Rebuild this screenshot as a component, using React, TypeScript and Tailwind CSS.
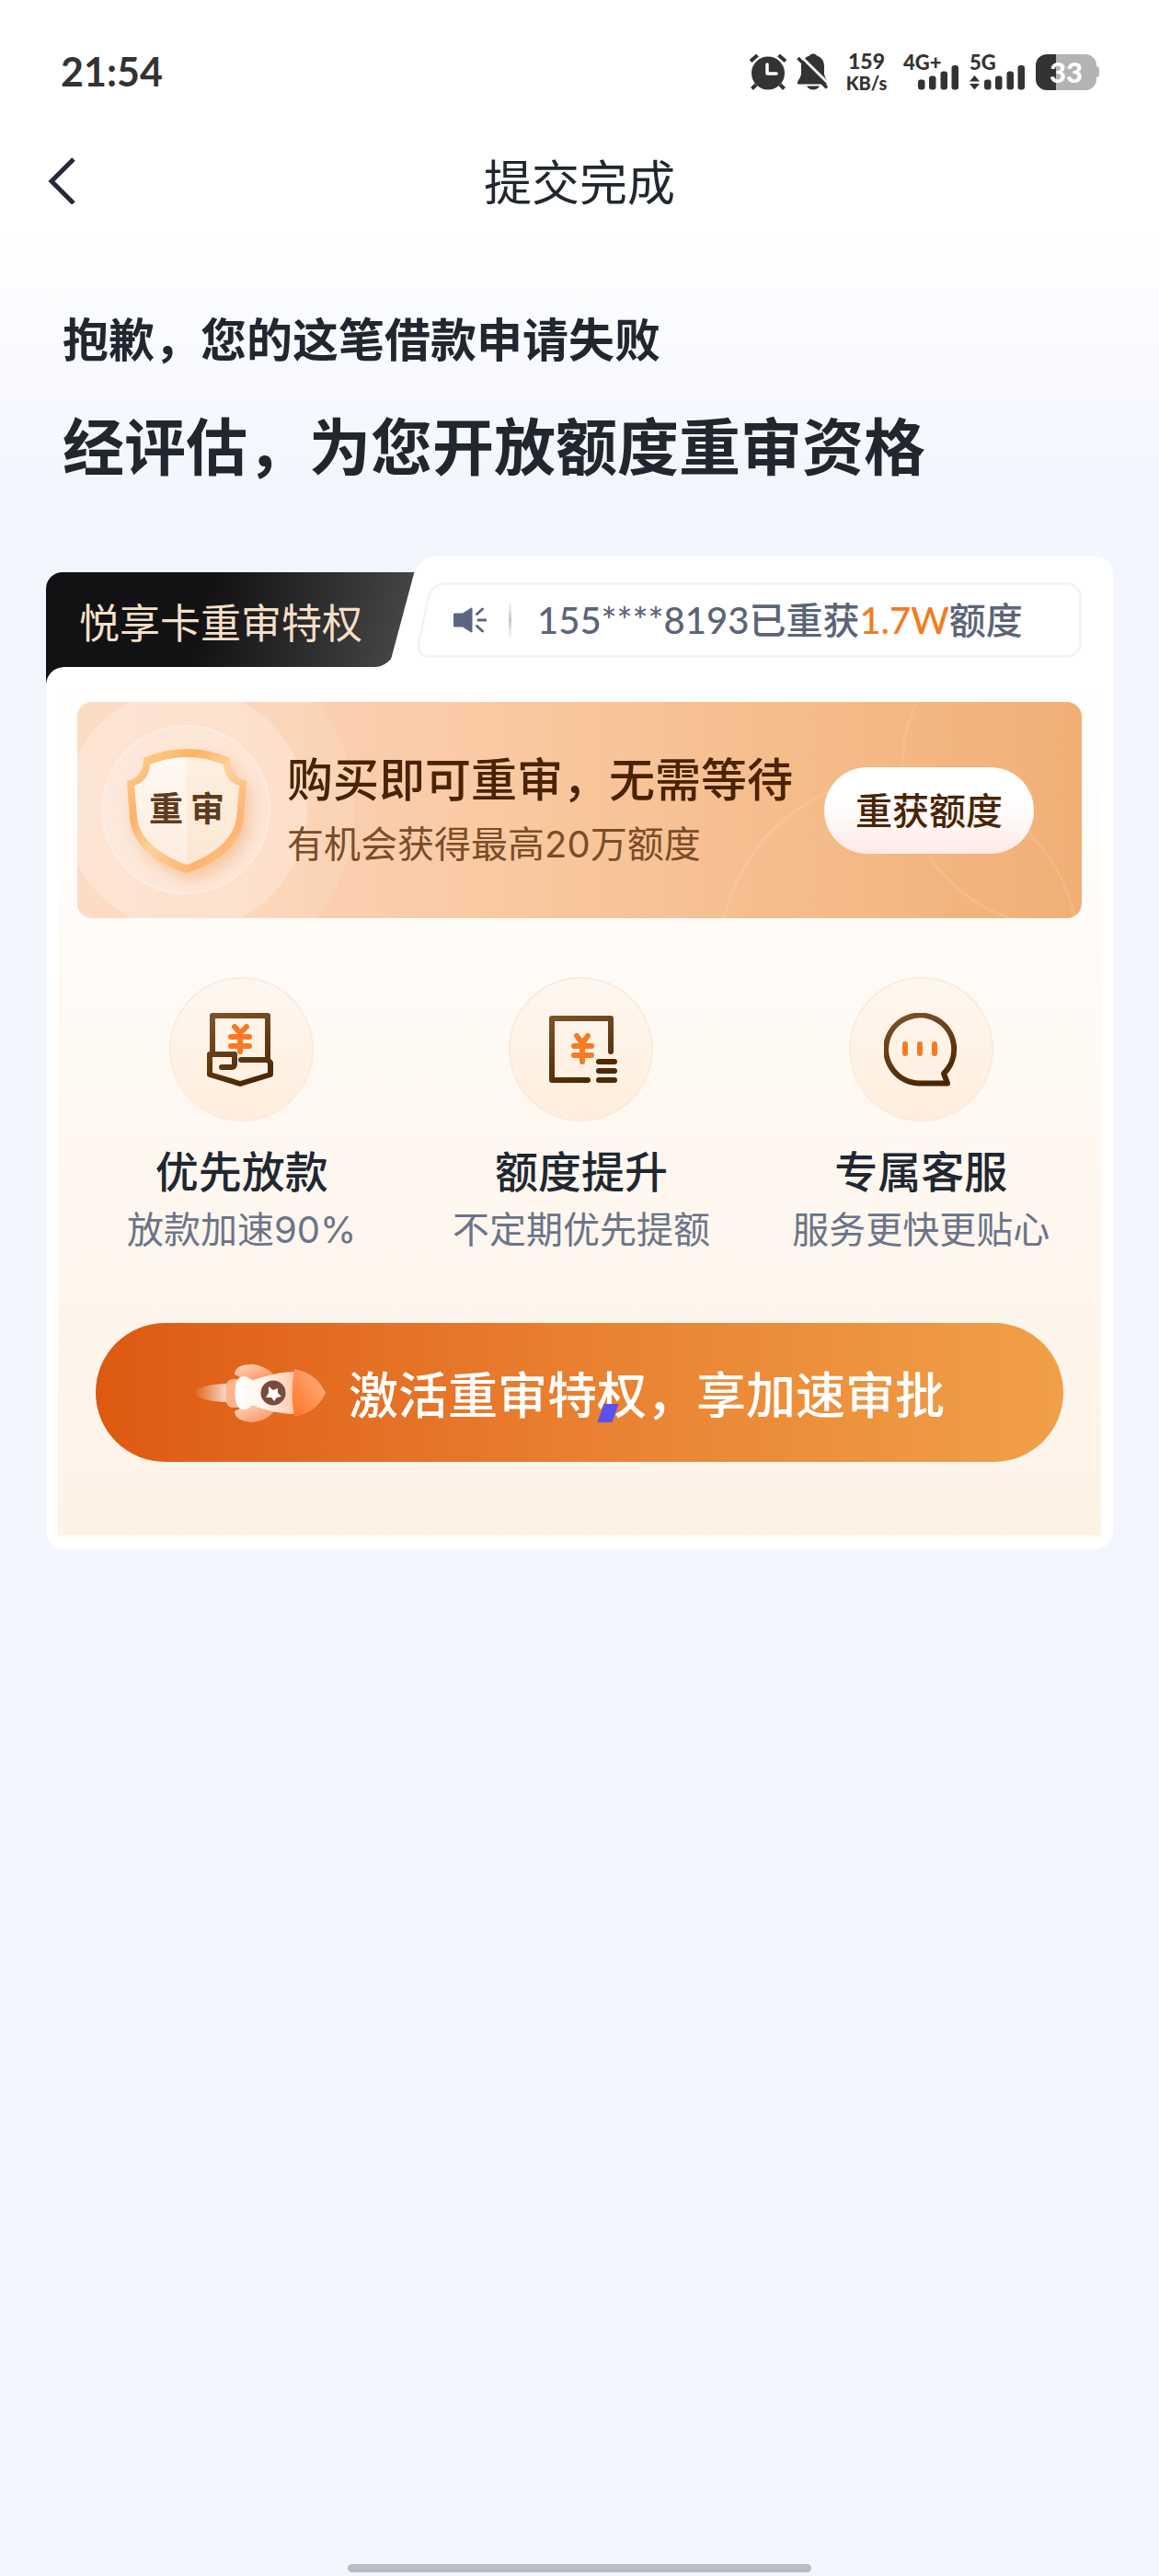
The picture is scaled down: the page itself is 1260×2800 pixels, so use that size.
import type { ReactNode } from 'react'

type Feature = {
  title: string
  desc: string
  icon: ReactNode
}

function AlarmIcon() {
  return (
    <svg className="h-10 w-[42px]" viewBox="0 0 42 40" fill="none" aria-hidden="true">
      <circle cx="21" cy="21.500" r="18" fill="#333" />
      <path d="M2 8.500 9.500 2M40 8.500 32.500 2" stroke="#333" strokeWidth="4" />
      <path d="M8 34 3.500 38.500M34 34l4.500 4.500" stroke="#333" strokeWidth="4" />
      <path d="M20 12v10h10" stroke="#fff" strokeWidth="3.500" strokeLinecap="round" strokeLinejoin="round" />
    </svg>
  )
}

function BellOffIcon() {
  return (
    <svg className="h-10 w-[36px]" viewBox="0 0 36 40" fill="none" aria-hidden="true">
      <path d="M14 2.500C15 1 16.500 .5 18 .5s3 .5 4 2c5 1.500 8 6 8 11.500v8c0 3 2 5 4 9v2.500H1V31c2-4 4-6 4-9v-8C5 8.500 9 4 14 2.500Z" fill="#333" />
      <path d="M11 35.500h14c-1.500 2.500-4 4-7 4s-5.500-1.500-7-4Z" fill="#333" />
      <path d="M4 2.500 36 34" stroke="#fff" strokeWidth="3" />
      <path d="M1.500 5 33 37.500" stroke="#333" strokeWidth="3.500" />
    </svg>
  )
}

function SignalBars() {
  return (
    <svg className="h-7 w-[44px]" viewBox="0 0 44 28" fill="#333" aria-hidden="true">
      <rect x="0" y="16.500" width="7.500" height="11" rx="3" />
      <rect x="12" y="12.500" width="7.500" height="15" rx="3" />
      <rect x="24.500" y="7.500" width="7.500" height="20" rx="3" />
      <rect x="36.500" y="1" width="7.500" height="26.500" rx="3" />
    </svg>
  )
}

function StatusBar() {
  return (
    <div className="mt-12 flex h-[60px] items-center justify-between pl-[66px] pr-[65px] font-['Lato',sans-serif] font-bold text-[#333]">
      <span className="text-[43px] leading-[60px]">21:54</span>
      <div className="flex items-center font-black">
        <AlarmIcon />
        <span className="ml-[10px] flex">
          <BellOffIcon />
        </span>
        <span className="ml-4 w-12 text-center text-[23px] leading-6">
          159
          <span className="block text-[20px]">KB/s</span>
        </span>
        <span className="relative ml-4 flex h-10 w-[60px] items-end justify-end">
          <span className="absolute left-0 top-0 text-[22px] leading-5">4G+</span>
          <SignalBars />
        </span>
        <span className="relative ml-3 flex h-10 w-[60px] items-end justify-between">
          <span className="absolute left-0 top-0 text-[22px] leading-5">5G</span>
          <svg className="h-4 w-[11px]" viewBox="0 0 11 16" fill="#333" aria-hidden="true">
            <path d="M5.500 0 11 6.500H0ZM5.500 15.500 11 9H0Z" />
          </svg>
          <SignalBars />
        </span>
        <span className="ml-3 flex items-center">
          <span className="flex h-[39px] w-[66px] items-center justify-center rounded-xl bg-linear-to-r from-[#333] from-33% to-[#b3b3b3] to-33% text-[31px] leading-8 text-white">
            33
          </span>
          <span className="h-3 w-[3px] rounded-r-sm bg-[#b3b3b3]" />
        </span>
      </div>
    </div>
  )
}

function SpeakerIcon() {
  return (
    <svg className="h-7 w-9 shrink-0" viewBox="0 0 36 28" fill="none" aria-hidden="true">
      <path d="M1.500 6.500H10L19 .8c.8-.5 1.500 0 1.500.8v24.800c0 .8-.7 1.300-1.500.8L10 21.500H1.500C.7 21.500 0 21 0 20V8c0-1 .7-1.500 1.500-1.500Z" fill="#5b6780" />
      <path d="m25.500 7.500 6-5.500M27 14h8M25.500 20.500l6 5.500" stroke="#5b6780" strokeWidth="3" strokeLinecap="round" />
    </svg>
  )
}

function Shield() {
  return (
    <svg className="absolute inset-0 h-full w-full" viewBox="0 0 130 136" fill="none" overflow="visible" aria-hidden="true">
      <defs>
        <linearGradient id="shieldEdge" x1="0" y1="0" x2="1" y2="1">
          <stop offset="0" stopColor="#ffd39a" />
          <stop offset=".3" stopColor="#fbb367" />
          <stop offset=".5" stopColor="#ffd09c" />
          <stop offset=".75" stopColor="#fdb471" />
          <stop offset="1" stopColor="#ffc999" />
        </linearGradient>
        <linearGradient id="shieldFace" x1="0" y1="0" x2="0" y2="1">
          <stop offset="0" stopColor="#fff9f3" />
          <stop offset="1" stopColor="#fdeddd" />
        </linearGradient>
      </defs>
      <path
        className="drop-shadow-[6px_8px_8px_rgba(240,150,80,0.4)]"
        d="M65 1c17 0 33 4 47 10 0 15 6 22 18 25l-3 40c-2 28-26 48-62 60C29 124 5 104 3 76L0 36c12-3 18-10 18-25C32 5 48 1 65 1Z"
        fill="url(#shieldEdge)"
      />
      <path d="M65 10c14 0 28 3 40 8 1 12 6 19 17 23l-3 34c-2 22-22 40-54 52-32-12-52-30-54-52L8 41c11-4 16-11 17-23 12-5 26-8 40-8Z" fill="url(#shieldFace)" />
      <path d="M65 10c14 0 28 3 40 8 1 12 6 19 17 23l-3 34c-2 22-22 40-54 52Z" fill="#fbdcc0" opacity=".35" />
    </svg>
  )
}

function Rocket() {
  return (
    <svg className="h-16 w-36 shrink-0" viewBox="0 0 144 64" fill="none" aria-hidden="true">
      <defs>
        <linearGradient id="flame" x1="0" y1="0" x2="1" y2="0">
          <stop offset="0" stopColor="#fff" stopOpacity="0" />
          <stop offset="1" stopColor="#fff" stopOpacity=".8" />
        </linearGradient>
        <linearGradient id="fin" x1="0" y1="0" x2="1" y2="1">
          <stop offset="0" stopColor="#ffd8c0" />
          <stop offset="1" stopColor="#f98a4e" />
        </linearGradient>
        <linearGradient id="hull" x1="0" y1="0" x2="1" y2="0">
          <stop offset="0" stopColor="#fff" />
          <stop offset=".5" stopColor="#fff2ea" />
          <stop offset="1" stopColor="#ffc9a8" />
        </linearGradient>
        <linearGradient id="nose" x1="0" y1="1" x2="1" y2="0">
          <stop offset="0" stopColor="#ff7427" />
          <stop offset=".6" stopColor="#ff9a60" />
          <stop offset="1" stopColor="#ffb68a" />
        </linearGradient>
      </defs>
      <path d="M0 30c10-6 22-8 38-8v20C22 42 10 40 0 34Z" fill="url(#flame)" />
      <path d="M44 12C44 4 52 1 63 1c11 1 21 6 27 16L56 18Z" fill="url(#fin)" />
      <path d="M44 52c0 8 8 11 19 12 11-1 21-6 27-16L56 46Z" fill="url(#fin)" />
      <rect x="35" y="17" width="18" height="31" rx="7" fill="#ffb48c" />
      <path d="M46 20c2-4 4-6 9-6 4 0 5 3 9 4 16-5 30-9 45-9v46c-15 0-29-4-45-9-4 1-5 4-9 4-5 0-7-2-9-6-2-8-2-16 0-24Z" fill="url(#hull)" />
      <path d="M109 6c17 3 28 13 34 26-6 13-17 23-34 26-3-17-3-35 0-52Z" fill="url(#nose)" />
      <circle cx="86" cy="32" r="13.500" fill="#7a4a3c" />
      <path d="m81 25 5 4 5-2 0 5 4 4-5 1-3 4-3-4-6 0 3-5Z" fill="#fff" />
    </svg>
  )
}

function LoanIcon() {
  return (
    <svg className="h-20 w-20" viewBox="0 0 80 80" fill="none" strokeLinecap="round" strokeLinejoin="round" aria-hidden="true">
      <defs>
        <linearGradient id="loan" gradientUnits="userSpaceOnUse" x1="20" y1="0" x2="50" y2="80">
          <stop offset="0" stopColor="#7d5228" />
          <stop offset="1" stopColor="#4a2400" />
        </linearGradient>
      </defs>
      <path d="M8 43V3h60v48" stroke="url(#loan)" strokeWidth="6" />
      <path d="M18 59h10c3 0 4-1 4-4V45H5v22l33 10 33-10V54l-3-3H39" stroke="url(#loan)" strokeWidth="6" />
      <path d="m32 15 6 7 7-7M28 26h20M28 36h20M38 24v18" stroke="#fa7a24" strokeWidth="6" />
    </svg>
  )
}

function LimitIcon() {
  return (
    <svg className="h-20 w-20" viewBox="0 0 80 80" fill="none" strokeLinecap="round" strokeLinejoin="round" aria-hidden="true">
      <defs>
        <linearGradient id="limit" gradientUnits="userSpaceOnUse" x1="20" y1="0" x2="50" y2="80">
          <stop offset="0" stopColor="#7d5228" />
          <stop offset="1" stopColor="#4a2400" />
        </linearGradient>
      </defs>
      <path d="M72 42V6H8v67h39" stroke="url(#limit)" strokeWidth="6" />
      <path d="M59 53h17M59 63h17M59 73h17" stroke="#4f2904" strokeWidth="6" />
      <path d="m35 25 6 8 6-8M32 36h19M32 46h19M41 34v19" stroke="#fa7a24" strokeWidth="6" />
    </svg>
  )
}

function ServiceIcon() {
  return (
    <svg className="h-20 w-20" viewBox="0 0 80 80" fill="none" strokeLinecap="round" strokeLinejoin="round" aria-hidden="true">
      <defs>
        <linearGradient id="service" gradientUnits="userSpaceOnUse" x1="20" y1="0" x2="50" y2="80">
          <stop offset="0" stopColor="#7d5228" />
          <stop offset="1" stopColor="#4a2400" />
        </linearGradient>
      </defs>
      <path d="M65 66a37 37 0 1 0-26 10.500h30c-1-4-3-7-4-10.500Z" stroke="url(#service)" strokeWidth="6" />
      <path d="M23 34v10M39 34v10M55 34v10" stroke="#fa7a24" strokeWidth="6" />
    </svg>
  )
}

const FEATURES: Feature[] = [
  { title: '优先放款', desc: '放款加速90%', icon: <LoanIcon /> },
  { title: '额度提升', desc: '不定期优先提额', icon: <LimitIcon /> },
  { title: '专属客服', desc: '服务更快更贴心', icon: <ServiceIcon /> },
]

function CardHeader() {
  return (
    <div className="relative flex h-[121px]">
      {/* dark tab with a slanted right edge */}
      <div className="relative mt-[18px] w-[389px] shrink-0">
        <div className="absolute bottom-0 right-0 h-6 w-12 bg-white" />
        <div className="absolute -bottom-5 left-0 top-0 w-12 rounded-tl-[18px] bg-[#121214]" />
        <div className="absolute inset-y-0 left-5 right-0 origin-center -skew-x-15 rounded-br-[18px] bg-linear-to-r from-[#121214] from-40% to-[#454545]" />
        <h3 className="relative pl-9 text-[44px] leading-[106px] text-[#f6dfc6]">悦享卡重审特权</h3>
      </div>

      {/* notice */}
      <div className="relative flex-1">
        <div className="absolute inset-y-0 left-0 w-1/2 -skew-x-15 rounded-tl-[20px] bg-white" />
        <div className="absolute inset-y-0 left-1/4 right-0 rounded-tr-[20px] bg-white" />
        <div className="relative ml-5 mr-[34px] mt-[29px] flex h-[82px] items-center">
          <div className="absolute inset-y-0 left-0 w-1/2 -skew-x-12 rounded-l-2xl border-[3px] border-r-0 border-[#f3f3f3]" />
          <div className="absolute inset-y-0 left-[45%] right-0 rounded-r-2xl border-[3px] border-l-0 border-[#f3f3f3]" />
          <div className="relative flex items-center pl-[34px]">
            <SpeakerIcon />
            <span className="ml-6 h-[42px] w-[3px] bg-linear-to-b from-transparent via-[#c4c6cc] to-transparent" />
            <p className="ml-7 whitespace-nowrap font-['Lato','Noto_Sans_CJK_SC',sans-serif] text-[40px] font-medium leading-[60px] text-[#5b6478]">
              155****8193已重获<span className="text-[#f47a20]">1.7W</span>额度
            </p>
          </div>
        </div>
      </div>
    </div>
  )
}

function Banner() {
  return (
    <div className="relative mx-[34px] flex h-[235px] items-center overflow-hidden rounded-2xl bg-linear-to-r from-[#fdd8c0] via-[#f9c8a0] via-45% to-[#f1af74]">
      <div className="absolute -left-[66px] -top-[67px] size-[368px] rounded-full bg-white/10" />
      <div className="absolute -left-[14px] -top-[15px] size-[264px] rounded-full bg-white/25" />
      <div className="absolute left-[26px] top-[25px] size-[184px] rounded-full border-2 border-white/20 bg-white/20" />
      <div className="absolute right-[1px] top-[81px] size-[394px] rounded-full border-[3px] border-white/10" />
      <div className="absolute -right-[149px] -top-[101px] size-[346px] rounded-full border-[3px] border-white/10" />

      <div className="relative ml-[54px] flex h-[136px] w-[130px] shrink-0 items-center justify-center gap-2 pb-2 text-[37px] font-bold leading-[52px] text-[#5f3b1c]">
        <Shield />
        <span className="relative">重</span>
        <span className="relative">审</span>
      </div>
      <div className="relative ml-11 flex-1 whitespace-nowrap">
        <h4 className="text-[50px] font-medium leading-[74px] text-[#4a2400]">购买即可重审，无需等待</h4>
        <p className="font-['Inter','Noto_Sans_CJK_SC',sans-serif] text-[40px] leading-[74px] text-[#7a4d28]">
          有机会获得最高20万额度
        </p>
      </div>
      <button
        type="button"
        className="relative mr-[52px] h-[94px] w-[228px] shrink-0 rounded-full bg-linear-to-b from-white from-40% to-[#feeae6] pb-1 text-[40px] font-medium leading-[60px] text-[#4a2400]"
      >
        重获额度
      </button>
    </div>
  )
}

export default function App() {
  return (
    <main className="flex min-h-screen flex-col bg-[#f3f6ff] bg-linear-to-b from-white from-[250px] to-[#f3f6ff] to-[530px] font-['Noto_Sans_CJK_SC',sans-serif] text-[#212731]">
      <StatusBar />

      <header className="relative mt-[38px] flex h-[100px] items-center justify-center">
        <button type="button" aria-label="返回" className="absolute left-[50px] top-6 p-0">
          <svg className="h-[52px] w-9" viewBox="0 0 36 52" fill="none" aria-hidden="true">
            <path d="M30 3 6 27l24 24" stroke="#252a3a" strokeWidth="5" />
          </svg>
        </button>
        <h1 className="text-[52px] leading-[72px]">提交完成</h1>
      </header>

      <section className="mt-[90px] px-[68px] font-bold">
        <p className="text-[50px] leading-[60px]">抱歉，您的这笔借款申请失败</p>
        <h2 className="mt-[46px] text-[67px] leading-[80px]">经评估，为您开放额度重审资格</h2>
      </section>

      <section className="mx-[50px] mt-[82px]">
        <CardHeader />
        <div className="relative rounded-b-[20px] rounded-tl-[20px] bg-white px-[13px] pb-[15px] pt-7">
          <div className="bg-linear-to-b from-white via-[#fff9f3] via-45% to-[#fdf2e6] pb-20 pt-[10px]">
            <div className="-mx-[13px]">
              <Banner />
              <ul className="mt-16 grid grid-cols-3 pl-7 pr-6 text-center">
                {FEATURES.map((f) => (
                  <li key={f.title} className="flex flex-col items-center">
                    <span className="flex size-[157px] items-center justify-center rounded-full border-2 border-[#fdeadd] bg-linear-to-b from-[#fff7f0] to-[#ffeedd]">
                      {f.icon}
                    </span>
                    <h4 className="mt-[22px] text-[47px] font-medium leading-[60px]">{f.title}</h4>
                    <p className="mt-3 whitespace-nowrap font-['Inter','Noto_Sans_CJK_SC',sans-serif] text-[40px] leading-[48px] text-[#6b7489]">
                      {f.desc}
                    </p>
                  </li>
                ))}
              </ul>
            </div>
            <button
              type="button"
              className="mx-[41px] mt-[77px] flex h-[151px] w-[calc(100%-82px)] items-center justify-center gap-6 rounded-full bg-linear-to-r from-[#dd5910] via-[#e98030] to-[#f0a048] pr-[22px] text-[54px] font-medium leading-[72px] text-white"
            >
              <Rocket />
              <span className="relative">
                激活重审特权，享加速审批
                <span className="absolute bottom-1 left-[274px] h-5 w-4 -skew-x-20 bg-[#5b50f2]" />
              </span>
            </button>
          </div>
        </div>
      </section>

      <div className="mx-auto mb-1 mt-auto h-[9px] w-[40%] rounded-full bg-[#babcc4]" />
    </main>
  )
}
